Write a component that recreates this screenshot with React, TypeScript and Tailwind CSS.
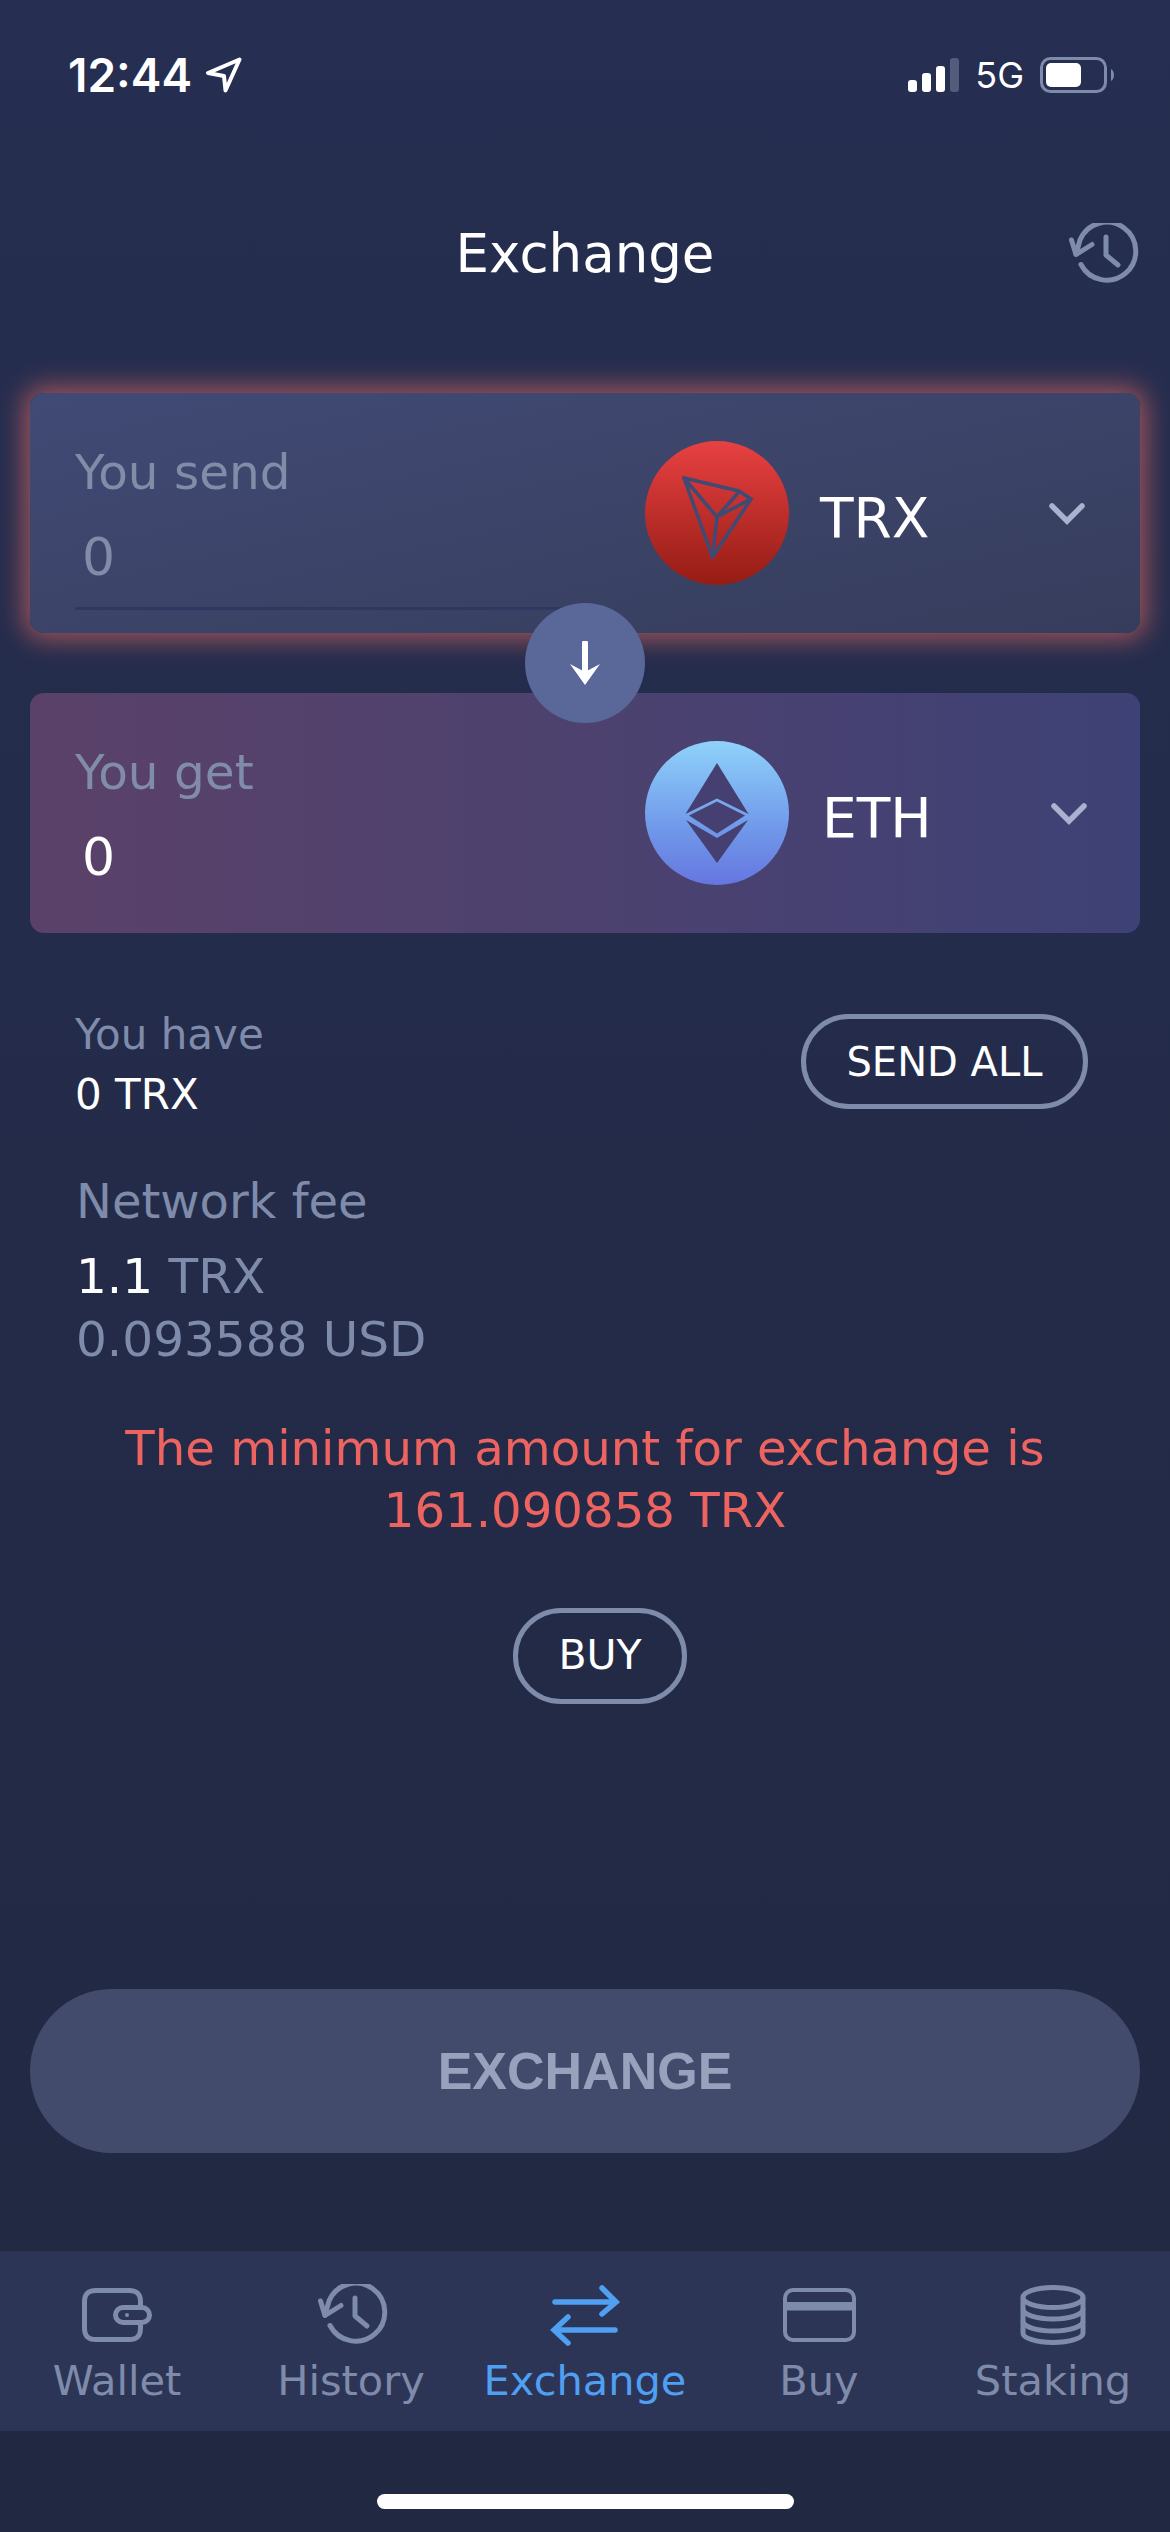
const FONT = "font-['DejaVu_Sans',sans-serif]";

function HistoryIcon({ className }: { className: string }) {
  return (
    <svg viewBox="0 0 70 62" className={className} fill="none" stroke="#7f8baa" strokeWidth="5" strokeLinecap="round" strokeLinejoin="round">
      <path d="M12 41.5 A29 29 0 1 0 11 17 L7 31" />
      <path d="M2.5 17 L7 31.5 L23 21.5" />
      <path d="M37 14 V32 L49 42" />
    </svg>
  );
}

function Chevron() {
  return (
    <svg viewBox="0 0 36 22" className="w-[36px] h-[22px]" fill="none" stroke="#a9b2cf" strokeWidth="5.5">
      <path d="M3 3 L18 18 L33 3" strokeLinecap="round" strokeLinejoin="miter" />
    </svg>
  );
}

function Tab({ label, active, icon }: { label: string; active?: boolean; icon: React.ReactNode }) {
  return (
    <div className="flex-1 flex flex-col items-center pt-[34px]">
      <div className="h-[60px] flex items-center justify-center">{icon}</div>
      <div className={`text-[41.5px] leading-[50px] mt-[11px] ${active ? "text-[#4f9ff2]" : "text-[#7f8baa]"}`}>{label}</div>
    </div>
  );
}

function Card({ label, value, valueClass, ticker, tickerClass, coin, cardClass, divider }: {
  label: string; value: string; valueClass: string; ticker: string; tickerClass: string; coin: React.ReactNode; cardClass: string; divider?: boolean;
}) {
  return (
    <div className={`h-[240px] rounded-[14px] flex items-start ${cardClass}`}>
      <div className="w-[490px] ml-[45px] mt-[52px] shrink-0">
        <div className="text-[48.5px] leading-[54px] text-[#818ca9]">{label}</div>
        <div className={`text-[52px] leading-[60px] mt-[28px] pl-[7px] ${valueClass}`}>{value}</div>
        {divider && <div className="h-[3px] mt-[20px] bg-[#2f3860]" />}
      </div>
      <div className="ml-[80px] mt-[48px] w-[144px] h-[144px] shrink-0">{coin}</div>
      <div className={`mt-[95px] w-[230px] text-[55px] leading-[60px] text-white shrink-0 ${tickerClass}`}>{ticker}</div>
      <div className="mt-[110px] -ml-[1px]"><Chevron /></div>
    </div>
  );
}

export default function App() {
  return (
    <div className={`w-[1170px] h-[2532px] relative overflow-hidden flex flex-col bg-gradient-to-b from-[#262e51] to-[#212841] ${FONT}`}>
      <div className="h-[150px] flex justify-between items-start pl-[68px] pr-[55px] pt-[50px]">
        <div className="flex items-center gap-[14px] text-white font-['Inter',sans-serif] font-semibold text-[46px] leading-[50px]">
          12:44
          <svg viewBox="0 0 36 36" className="w-[36px] h-[36px]" fill="none" stroke="white" strokeWidth="4" strokeLinejoin="round">
            <path d="M33.5 2.5 L2 16 L18 19 L19.5 33.5 Z" />
          </svg>
        </div>
        <div className="flex items-center gap-[16px]">
          <svg viewBox="0 0 51 34" className="w-[51px] h-[34px]">
            <rect x="0" y="22" width="9" height="12" rx="3" fill="white" />
            <rect x="14" y="15" width="9" height="19" rx="3" fill="white" />
            <rect x="28" y="8" width="9" height="26" rx="3" fill="white" />
            <rect x="42" y="0" width="9" height="34" rx="3" fill="#535c7a" />
          </svg>
          <span className="text-white font-['Inter',sans-serif] text-[36px] leading-[50px]">5G</span>
          <svg viewBox="0 0 75 36" className="w-[75px] h-[36px]">
            <rect x="1.5" y="1.5" width="64" height="33" rx="9" fill="none" stroke="#7f8baa" strokeWidth="3" />
            <rect x="6" y="6" width="35" height="24" rx="5" fill="white" />
            <path d="M71 12 C75 14 75 22 71 24 Z" fill="#7f8baa" />
          </svg>
        </div>
      </div>

      <div className="relative h-[243px] flex justify-center">
        <div className="text-white text-[53px] leading-[64px] mt-[72px]">Exchange</div>
        <HistoryIcon className="absolute left-[1069px] top-[73px] w-[70px] h-[62px]" />
      </div>

      <div className="mx-[30px] relative">
        <Card
          label="You send"
          value="0"
          valueClass="text-[#818ca9]"
          ticker="TRX"
          tickerClass="ml-[31px]"
          divider
          cardClass="bg-gradient-to-br from-[#414a75] to-[#363d5c] shadow-[0_0_26px_6px_rgba(240,110,100,0.6)]"
          coin={
            <svg viewBox="0 0 144 144" className="w-[144px] h-[144px]">
              <defs>
                <linearGradient id="trx" x1="0" y1="0" x2="0" y2="1">
                  <stop offset="0" stopColor="#e84142" />
                  <stop offset="1" stopColor="#951c14" />
                </linearGradient>
              </defs>
              <circle cx="72" cy="72" r="72" fill="url(#trx)" />
              <g fill="none" stroke="#3f4a75" strokeWidth="3.5" strokeLinejoin="round" strokeLinecap="round">
                <path d="M39 37 L94 50 L106 58 L67.5 116 Z" />
                <path d="M39 37 L72 76 L67.5 116" />
                <path d="M93 52 L72 76 L106 58" />
              </g>
            </svg>
          }
        />
        <div className="mt-[60px]">
          <Card
            label="You get"
            value="0"
            valueClass="text-white"
            ticker="ETH"
            tickerClass="ml-[33px]"
            cardClass="bg-gradient-to-r from-[#5a4169] to-[#3e4175]"
            coin={
              <svg viewBox="0 0 144 144" className="w-[144px] h-[144px]">
                <defs>
                  <linearGradient id="eth" x1="0" y1="0" x2="0" y2="1">
                    <stop offset="0" stopColor="#8fd2fb" />
                    <stop offset="0.6" stopColor="#7099ea" />
                    <stop offset="1" stopColor="#6676e0" />
                  </linearGradient>
                </defs>
                <circle cx="72" cy="72" r="72" fill="url(#eth)" />
                <path d="M72 22 L103.5 73 L72 57.5 L40.5 73 Z" fill="#463f71" />
                <path d="M44 74.5 L72 60.5 L100 74.5 L72 92.5 Z" fill="#463f71" />
                <path d="M41 79 L72 97 L103 79 L72 122 Z" fill="#463f71" />
              </svg>
            }
          />
        </div>
        <div className="absolute left-[495px] top-[210px] w-[120px] h-[120px] rounded-full bg-[#596799] flex items-center justify-center">
          <svg viewBox="0 0 32 44" className="w-[32px] h-[44px]">
            <path d="M16 2 V34" stroke="white" strokeWidth="6" strokeLinecap="round" />
            <path d="M1 23 L16 44 L31 23 L16 31 Z" fill="white" />
          </svg>
        </div>
      </div>

      <div className="mx-[75px] mt-[77px] flex justify-between items-start">
        <div>
          <div className="text-[42px] leading-[50px] text-[#7f8baa]">You have</div>
          <div className="text-[42px] leading-[50px] mt-[10px] text-white">0 TRX</div>
        </div>
        <div className="mt-[4px] mr-[7px] w-[287px] h-[95px] rounded-full border-[5px] border-[#7f8baa] flex items-center justify-center text-white text-[40px]">SEND ALL</div>
      </div>

      <div className="mx-[76px] mt-[53px] text-[48px] leading-[56px] text-[#7f8baa]">Network fee</div>
      <div className="mx-[76px] mt-[16px] text-[48.5px] leading-[63px] text-[#7f8baa]"><span className="text-white">1.1</span> TRX</div>
      <div className="mx-[76px] text-[48.5px] leading-[63px] text-[#7f8baa]">0.093588 USD</div>

      <div className="mt-[46px] text-center text-[48.2px] leading-[62px] text-[#ed6360]">
        <div>The minimum amount for exchange is</div>
        <div>161.090858 TRX</div>
      </div>

      <div className="ml-[513px] mt-[67px] w-[174px] h-[96px] rounded-full border-[5px] border-[#7f8baa] flex items-center justify-center text-white text-[41px]">BUY</div>

      <div className="mx-[30px] mt-[285px] h-[164px] rounded-full bg-[#424b6c] flex items-center justify-center font-['Liberation_Sans',sans-serif] font-bold text-[52px] text-[#98a2bd]">EXCHANGE</div>

      <div className="mt-[98px] h-[180px] bg-[#2d3556] flex">
        <Tab label="Wallet" icon={
          <svg viewBox="0 0 72 56" className="w-[72px] h-[56px]" fill="none" stroke="#7f8baa" strokeWidth="5">
            <path d="M59.5 20 V15 C59.5 7 56 3.5 48 3.5 H15 C7 3.5 3.5 7 3.5 15 V41 C3.5 49 7 52.5 15 52.5 H48 C56 52.5 59.5 49 59.5 41 V36" />
            <rect x="34.5" y="20.5" width="34" height="15" rx="7.5" />
            <circle cx="46" cy="28" r="2" fill="#7f8baa" stroke="none" />
          </svg>
        } />
        <Tab label="History" icon={<HistoryIcon className="w-[70px] h-[62px] ml-[3px]" />} />
        <Tab label="Exchange" active icon={
          <svg viewBox="0 0 70 62" className="w-[70px] h-[62px]" fill="none" stroke="#4f9ff2" strokeWidth="5.5" strokeLinecap="round" strokeLinejoin="miter">
            <path d="M5 18 H65" />
            <path d="M52 4 L66 18 L52 30" />
            <path d="M65 46 H5" />
            <path d="M18 33 L4 46 L18 59" />
          </svg>
        } />
        <Tab label="Buy" icon={
          <svg viewBox="0 0 73 54" className="w-[73px] h-[54px]" fill="none" stroke="#7f8baa" strokeWidth="4">
            <rect x="2" y="2" width="69" height="50" rx="8" />
            <rect x="2" y="14" width="69" height="8.5" fill="#7f8baa" stroke="none" />
          </svg>
        } />
        <Tab label="Staking" icon={
          <svg viewBox="0 0 66 60" className="w-[66px] h-[60px]" fill="none" stroke="#7f8baa" strokeWidth="5">
            <ellipse cx="33" cy="12.5" rx="30" ry="10" />
            <path d="M3 12.5 V48 A30 9.5 0 0 0 63 48 V12.5" />
            <path d="M3 24 A30 10 0 0 0 63 24" />
            <path d="M3 36 A30 10 0 0 0 63 36" />
          </svg>
        } />
      </div>

      <div className="mt-[63px] mx-auto w-[417px] h-[15px] rounded-full bg-white" />
    </div>
  );
}
